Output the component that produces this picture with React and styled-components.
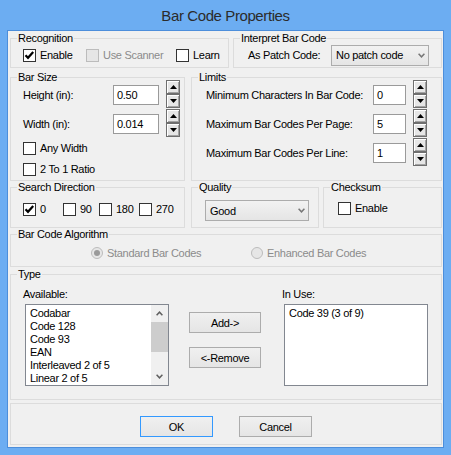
import styled, { createGlobalStyle } from 'styled-components';

const GlobalStyle = createGlobalStyle`
  html, body {
    margin: 0;
    padding: 0;
    background: #fff;
  }
  body {
    font-family: "Liberation Sans", Arial, sans-serif;
    font-size: 11px;
  }
`;

const Window = styled.div`
  width: 451px;
  height: 455px;
  box-sizing: border-box;
  background: #6cadf2;
  padding: 0 7px 7px;
  display: flex;
  flex-direction: column;
`;

const TitleBar = styled.div`
  height: 30px;
  flex: none;
  display: flex;
  align-items: center;
  justify-content: center;
  padding-top: 1px;
  box-sizing: border-box;
  font-size: 15px;
  letter-spacing: -0.4px;
  color: #2b2b2b;
`;

const Client = styled.div`
  flex: 1;
  border: 1px solid #4c8edb;
  background: #f0f0f0;
  padding: 0 1px 0 2px;
  display: flex;
  flex-direction: column;
  font-size: 11px;
  letter-spacing: -0.3px;
  color: #000;
`;

const Row = styled.div`
  display: flex;
  gap: ${({ $gap }) => $gap ?? 5}px;
  margin-top: ${({ $mt }) => $mt ?? 0}px;
  height: ${({ $h }) => $h}px;
  flex: none;
`;

const Group = styled.fieldset`
  margin: 0 0 0 ${({ $ml }) => $ml ?? 0}px;
  padding: 0;
  min-width: 0;
  border: 1px solid #dcdcdc;
  box-sizing: border-box;
  height: 100%;
  width: ${({ $w }) => ($w ? `${$w}px` : 'auto')};
  flex: ${({ $w }) => ($w ? 'none' : 1)};
  display: flex;
  flex-direction: column;
`;

const Legend = styled.legend`
  margin-left: 6px;
  padding: 0 1px;
  line-height: 13px;
  height: 13px;
`;

const Body = styled.div`
  display: flex;
  flex-direction: ${({ $col }) => ($col ? 'column' : 'row')};
  align-items: ${({ $col }) => ($col ? 'stretch' : 'center')};
  margin-top: ${({ $mt }) => $mt ?? 0}px;
  padding-left: ${({ $pl }) => $pl ?? 12}px;
  height: ${({ $h }) => ($h ? `${$h}px` : 'auto')};
`;

const Option = styled.label`
  display: flex;
  align-items: center;
  gap: 4px;
  height: 20px;
  flex: none;
  margin-top: ${({ $mt }) => $mt ?? 0}px;
  width: ${({ $w }) => ($w ? `${$w}px` : 'auto')};
  color: ${({ $disabled }) => ($disabled ? '#8b8b8b' : '#000')};
`;

const Box = styled.span`
  width: 13px;
  height: 13px;
  box-sizing: border-box;
  flex: none;
  border: 1px solid ${({ $disabled }) => ($disabled ? '#bcbcbc' : '#333')};
  background: ${({ $disabled }) => ($disabled ? '#e6e6e6' : '#fff')};
  display: flex;
  align-items: center;
  justify-content: center;
`;

const RadioCircle = styled.span`
  width: 12px;
  height: 12px;
  box-sizing: border-box;
  flex: none;
  border-radius: 50%;
  border: 1px solid #bcbcbc;
  background: #e6e6e6;
  display: flex;
  align-items: center;
  justify-content: center;
`;

const RadioDot = styled.span`
  width: 6px;
  height: 6px;
  border-radius: 50%;
  background: #9a9a9a;
`;

const Select = styled.div`
  width: ${({ $w }) => $w}px;
  height: 21px;
  box-sizing: border-box;
  flex: none;
  border: 1px solid #acacac;
  background: linear-gradient(#f2f2f2, #e5e5e5);
  display: flex;
  align-items: center;
  justify-content: space-between;
  padding: 0 3px 0 4px;
`;

const FieldLabel = styled.span`
  width: ${({ $w }) => $w}px;
  flex: none;
`;

const FieldGrid = styled.div`
  display: grid;
  grid-template-columns: ${({ $cols }) => $cols};
  grid-auto-rows: 29px;
  align-items: center;
`;

const Edit = styled.div`
  height: 20px;
  box-sizing: border-box;
  border: 1px solid #9a9a9a;
  background: #fff;
  padding-left: 3px;
  display: flex;
  align-items: center;
`;

const Spinner = styled.div`
  grid-column: 4;
  width: 14px;
  height: 28px;
  display: flex;
  flex-direction: column;
  align-self: start;
`;

const SpinButton = styled.span`
  width: 14px;
  height: 14px;
  box-sizing: border-box;
  border: 1px solid #6f6f6f;
  background: #e6e6e6;
  box-shadow: inset 1px 1px #fff, inset -1px -1px #a3a3a3;
  display: flex;
  align-items: center;
  justify-content: center;
`;

const TypeGrid = styled.div`
  display: grid;
  grid-template-columns: 144px 72px 144px;
  column-gap: 20px;
  margin-top: 7px;
  padding-left: 14px;
`;

const TypeColumn = styled.div`
  display: flex;
  flex-direction: column;
  gap: ${({ $gap }) => $gap ?? 3}px;
  padding-top: ${({ $pt }) => $pt ?? 0}px;
  margin-left: ${({ $ml }) => $ml ?? 0}px;
`;

const ListLabel = styled.span`
  line-height: 13px;
  margin-left: -2px;
`;

const ListBox = styled.div`
  width: 144px;
  height: 82px;
  box-sizing: border-box;
  border: 1px solid #828790;
  background: #fff;
  display: flex;
`;

const ListItems = styled.div`
  flex: 1;
  padding: 2px 0 0 4px;
  overflow: hidden;
`;

const ListItem = styled.div`
  line-height: 13px;
  white-space: nowrap;
`;

const ScrollBar = styled.div`
  width: 17px;
  flex: none;
  background: #f0f0f0;
  display: flex;
  flex-direction: column;
`;

const ScrollArrow = styled.span`
  height: 17px;
  flex: none;
  display: flex;
  align-items: center;
  justify-content: center;
`;

const ScrollThumb = styled.span`
  height: 30px;
  flex: none;
  background: #cdcdcd;
`;

const ScrollTrack = styled.span`
  flex: 1;
`;

const Button = styled.button`
  width: ${({ $w }) => $w}px;
  height: 21px;
  box-sizing: border-box;
  padding: 0;
  border: 1px solid ${({ $default }) => ($default ? '#3399ff' : '#acacac')};
  background: linear-gradient(#f0f0f0, #e5e5e5);
  font: inherit;
  letter-spacing: inherit;
  color: #000;
`;

const Footer = styled.div`
  margin-top: 3px;
  height: 42px;
  box-sizing: border-box;
  flex: none;
  border: 1px solid #dcdcdc;
  display: flex;
  justify-content: center;
  gap: 26px;
  padding-top: 12px;
`;

const Check = () => (
  <svg width="11" height="11" viewBox="0 0 11 11">
    <polyline points="1.5,5.2 4,7.8 9.2,2" fill="none" stroke="#000" strokeWidth="2.2" />
  </svg>
);

const Chevron = ({ color = '#777', up }) => (
  <svg width="7" height="5" viewBox="0 0 7 5">
    <polyline
      points={up ? '0.6,4.2 3.5,1.2 6.4,4.2' : '0.6,0.8 3.5,3.8 6.4,0.8'}
      fill="none"
      stroke={color}
      strokeWidth="1.5"
    />
  </svg>
);

const Triangle = ({ down }) => (
  <svg width="7" height="4" viewBox="0 0 7 4">
    <polygon points={down ? '0,0 7,0 3.5,4' : '0,4 7,4 3.5,0'} fill="#000" />
  </svg>
);

const CheckBox = ({ label, checked, disabled, w, mt }) => (
  <Option $w={w} $mt={mt} $disabled={disabled}>
    <Box $disabled={disabled}>{checked && <Check />}</Box>
    {label}
  </Option>
);

const Radio = ({ label, checked, w }) => (
  <Option $w={w} $disabled>
    <RadioCircle>{checked && <RadioDot />}</RadioCircle>
    {label}
  </Option>
);

const Spin = () => (
  <Spinner>
    <SpinButton><Triangle /></SpinButton>
    <SpinButton><Triangle down /></SpinButton>
  </Spinner>
);

const available = ['Codabar', 'Code 128', 'Code 93', 'EAN', 'Interleaved 2 of 5', 'Linear 2 of 5'];

export default function App() {
  return (
    <>
      <GlobalStyle />
      <Window>
        <TitleBar>Bar Code Properties</TitleBar>
        <Client>
          <Row $mt={1} $h={36} $gap={4}>
            <Group $w={219}>
              <Legend>Recognition</Legend>
              <Body>
                <CheckBox label="Enable" checked w={63} />
                <CheckBox label="Use Scanner" disabled w={90} />
                <CheckBox label="Learn" />
              </Body>
            </Group>
            <Group>
              <Legend>Interpret Bar Code</Legend>
              <Body $pl={14} $h={20}>
                <FieldLabel $w={83}>As Patch Code:</FieldLabel>
                <Select $w={98}>
                  No patch code
                  <Chevron />
                </Select>
              </Body>
            </Group>
          </Row>

          <Row $mt={3} $h={110} $gap={6}>
            <Group $w={175}>
              <Legend>Bar Size</Legend>
              <Body $col $mt={-4}>
                <FieldGrid $cols="90px 46px 7px 14px">
                  <span>Height (in):</span>
                  <Edit>0.50</Edit>
                  <Spin />
                  <span>Width (in):</span>
                  <Edit>0.014</Edit>
                  <Spin />
                </FieldGrid>
                <CheckBox label="Any Width" />
                <CheckBox label="2 To 1 Ratio" mt={1} />
              </Body>
            </Group>
            <Group>
              <Legend>Limits</Legend>
              <Body $col $mt={-4} $pl={14}>
                <FieldGrid $cols="167px 33px 7px 14px">
                  <span>Minimum Characters In Bar Code:</span>
                  <Edit>0</Edit>
                  <Spin />
                  <span>Maximum Bar Codes Per Page:</span>
                  <Edit>5</Edit>
                  <Spin />
                  <span>Maximum Bar Codes Per Line:</span>
                  <Edit>1</Edit>
                  <Spin />
                </FieldGrid>
              </Body>
            </Group>
          </Row>

          <Row $h={47} $gap={6}>
            <Group $w={175}>
              <Legend>Search Direction</Legend>
              <Body $mt={5}>
                <CheckBox label="0" checked w={40} />
                <CheckBox label="90" w={36} />
                <CheckBox label="180" w={40} />
                <CheckBox label="270" />
              </Body>
            </Group>
            <Group $w={128}>
              <Legend>Quality</Legend>
              <Body $mt={6} $pl={13}>
                <Select $w={104}>
                  Good
                  <Chevron />
                </Select>
              </Body>
            </Group>
            <Group $ml={-2}>
              <Legend>Checksum</Legend>
              <Body $mt={4} $pl={14}>
                <CheckBox label="Enable" />
              </Body>
            </Group>
          </Row>

          <Row $h={39}>
            <Group>
              <Legend>Bar Code Algorithm</Legend>
              <Body $mt={2} $pl={80}>
                <Radio label="Standard Bar Codes" checked w={160} />
                <Radio label="Enhanced Bar Codes" />
              </Body>
            </Group>
          </Row>

          <Row $mt={1} $h={132}>
            <Group>
              <Legend>Type</Legend>
              <TypeGrid>
                <TypeColumn>
                  <ListLabel>Available:</ListLabel>
                  <ListBox>
                    <ListItems>
                      {available.map((item) => (
                        <ListItem key={item}>{item}</ListItem>
                      ))}
                    </ListItems>
                    <ScrollBar>
                      <ScrollArrow><Chevron color="#606060" up /></ScrollArrow>
                      <ScrollThumb />
                      <ScrollTrack />
                      <ScrollArrow><Chevron color="#606060" /></ScrollArrow>
                    </ScrollBar>
                  </ListBox>
                </TypeColumn>
                <TypeColumn $pt={24} $gap={14}>
                  <Button $w={72}>Add-&gt;</Button>
                  <Button $w={72}>&lt;-Remove</Button>
                </TypeColumn>
                <TypeColumn $ml={3}>
                  <ListLabel>In Use:</ListLabel>
                  <ListBox>
                    <ListItems>
                      <ListItem>Code 39 (3 of 9)</ListItem>
                    </ListItems>
                  </ListBox>
                </TypeColumn>
              </TypeGrid>
            </Group>
          </Row>

          <Footer>
            <Button $w={73} $default>OK</Button>
            <Button $w={73}>Cancel</Button>
          </Footer>
        </Client>
      </Window>
    </>
  );
}
